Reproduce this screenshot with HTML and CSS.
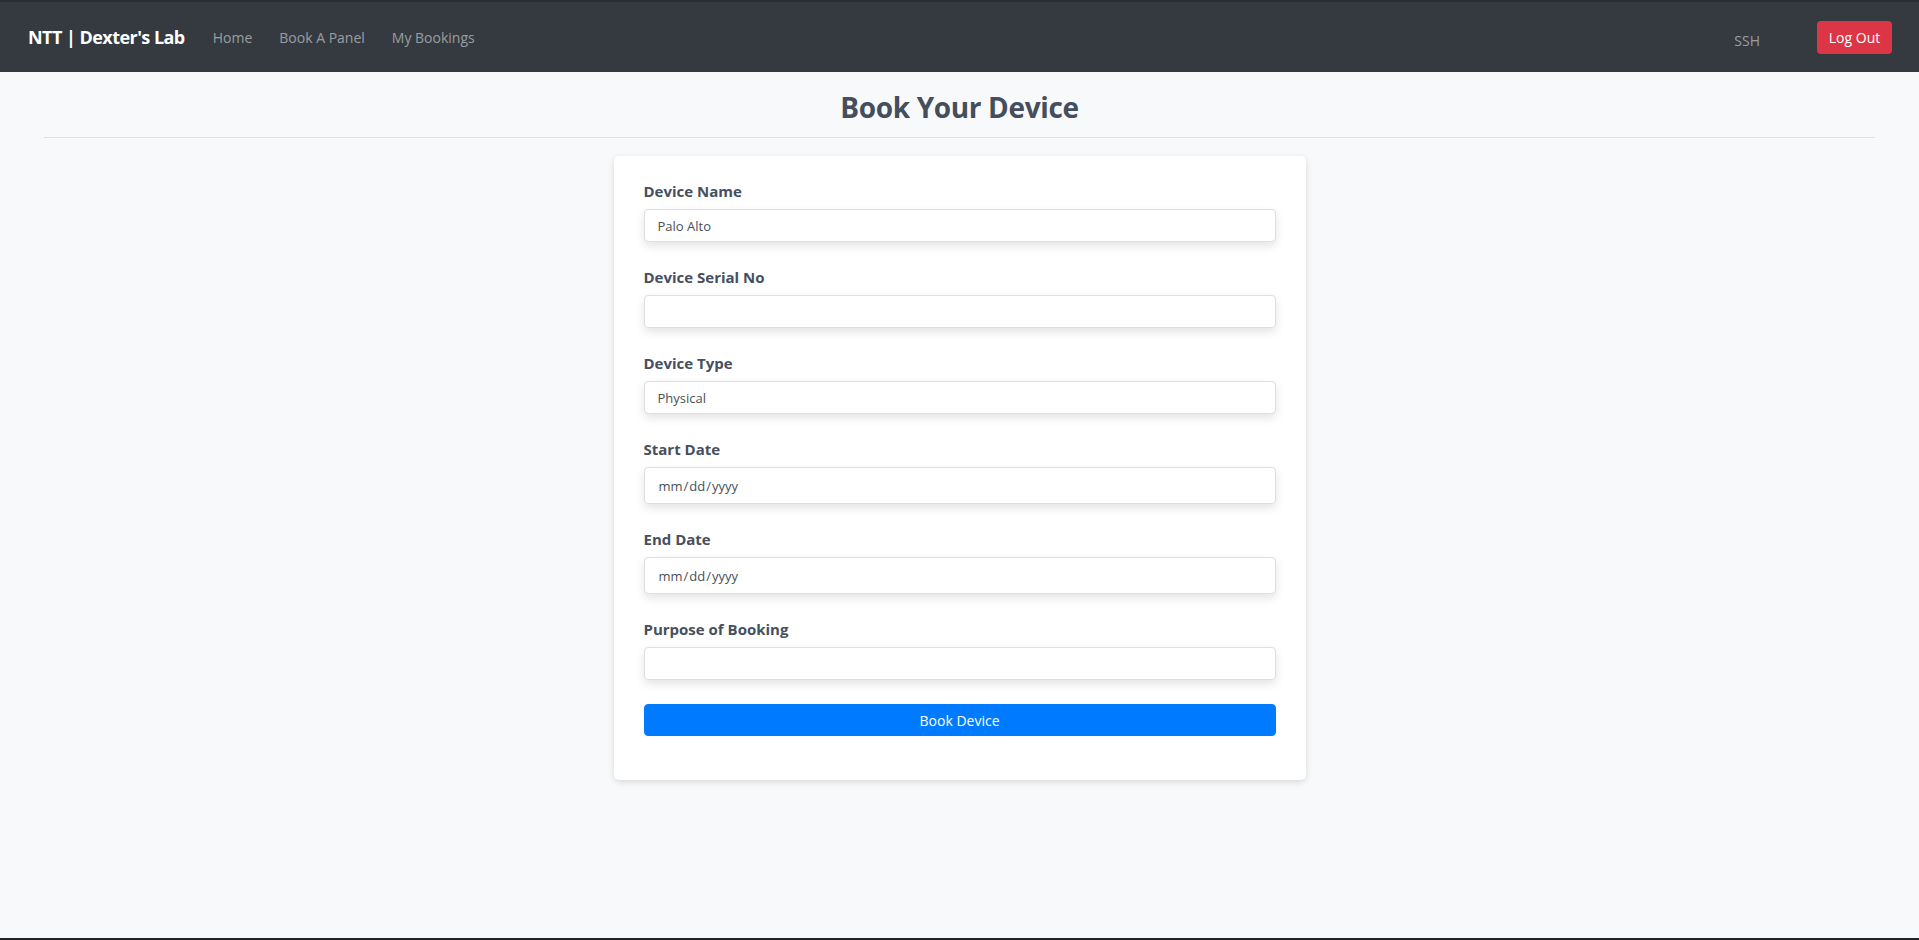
FILE: index.html
```html
<!DOCTYPE html>
<html lang="en">
<head>
<meta charset="utf-8">
<title>Book Your Device</title>
<link rel="stylesheet" href="styles.css">
</head>
<body>
<div class="page">
  <nav class="navbar">
    <a class="brand" href="#">NTT | Dexter's Lab</a>
    <div class="nav-links">
      <a class="nav-link" href="#">Home</a>
      <a class="nav-link" href="#">Book A Panel</a>
      <a class="nav-link" href="#">My Bookings</a>
    </div>
    <div class="nav-right">
      <span class="user">SSH</span>
      <button class="btn-logout" type="button">Log Out</button>
    </div>
  </nav>

  <header class="page-header">
    <h2 class="page-title">Book Your Device</h2>
  </header>

  <main class="card">
    <form class="booking-form">
      <div class="form-group">
        <label class="form-label">Device Name</label>
        <input class="form-input" type="text" value="Palo Alto" readonly>
      </div>
      <div class="form-group">
        <label class="form-label">Device Serial No</label>
        <input class="form-input" type="text" value="">
      </div>
      <div class="form-group">
        <label class="form-label">Device Type</label>
        <input class="form-input" type="text" value="Physical" readonly>
      </div>
      <div class="form-group">
        <label class="form-label">Start Date</label>
        <input class="form-input form-date" type="date">
      </div>
      <div class="form-group">
        <label class="form-label">End Date</label>
        <input class="form-input form-date" type="date">
      </div>
      <div class="form-group form-group-last">
        <label class="form-label">Purpose of Booking</label>
        <input class="form-input" type="text" value="">
      </div>
      <button class="btn-submit" type="button">Book Device</button>
    </form>
  </main>
</div>
</body>
</html>
```

FILE: styles.css
```css
* {
  box-sizing: border-box;
}

html, body {
  margin: 0;
  padding: 0;
}

body {
  background: #f8f9fa;
  font-family: "Open Sans", "Noto Sans", "Liberation Sans", sans-serif;
  color: #464f5e;
}

.page {
  min-height: 100vh;
  border-bottom: 2px solid #1f2326;
}

.navbar {
  height: 72px;
  background: #343a40;
  border-top: 2px solid #2a2e33;
  display: flex;
  align-items: center;
  padding: 0 27px 0 28px;
}

.brand {
  color: #ffffff;
  font-size: 18px;
  font-weight: 700;
  text-decoration: none;
  margin-right: 28px;
  letter-spacing: -0.55px;
}

.nav-links {
  display: flex;
  gap: 27px;
}

.nav-link {
  color: rgba(255, 255, 255, 0.5);
  font-size: 14px;
  text-decoration: none;
}

.nav-right {
  margin-left: auto;
  display: flex;
  align-items: center;
  gap: 57px;
}

.user {
  color: rgba(255, 255, 255, 0.5);
  font-size: 14px;
  padding-top: 6px;
}

.btn-logout {
  width: 75px;
  height: 33px;
  background: #dc3545;
  color: #ffffff;
  border: none;
  border-radius: 4px;
  font-family: inherit;
  font-size: 14px;
  padding: 0;
  cursor: pointer;
}

.page-header {
  margin: 0 44px;
  padding: 17px 0 11px;
  border-bottom: 1px solid #dfe2e6;
  text-align: center;
}

.page-title {
  margin: 0;
  font-size: 28px;
  line-height: 37px;
  font-weight: 700;
  color: #444e5d;
  letter-spacing: -0.35px;
}

.card {
  width: 692px;
  margin: 18px auto 0;
  background: #ffffff;
  border-radius: 5px;
  box-shadow: 0 2px 6px rgba(0, 0, 0, 0.13);
  padding: 23px 30px 44px;
}

.booking-form {
  display: flex;
  flex-direction: column;
}

.form-group {
  display: flex;
  flex-direction: column;
  margin-bottom: 23px;
}

.form-group-last {
  margin-bottom: 24px;
}

.form-label {
  font-size: 15px;
  line-height: 24px;
  font-weight: 700;
  color: #464f5e;
  margin-bottom: 6px;
}

.form-input {
  height: 33px;
  width: 100%;
  border: 1px solid #dcdfe3;
  border-radius: 4px;
  background: #ffffff;
  box-shadow: 0 4px 10px rgba(0, 0, 0, 0.11);
  padding: 0 13px;
  font-family: inherit;
  font-size: 13px;
  color: #495057;
  outline: none;
}

.form-date {
  height: 37px;
}

.form-date::-webkit-calendar-picker-indicator {
  display: none;
}

.btn-submit {
  height: 32px;
  width: 100%;
  background: #007bff;
  color: #ffffff;
  border: 1px solid #007bff;
  border-radius: 4px;
  font-family: inherit;
  font-size: 14px;
  cursor: pointer;
}
```
